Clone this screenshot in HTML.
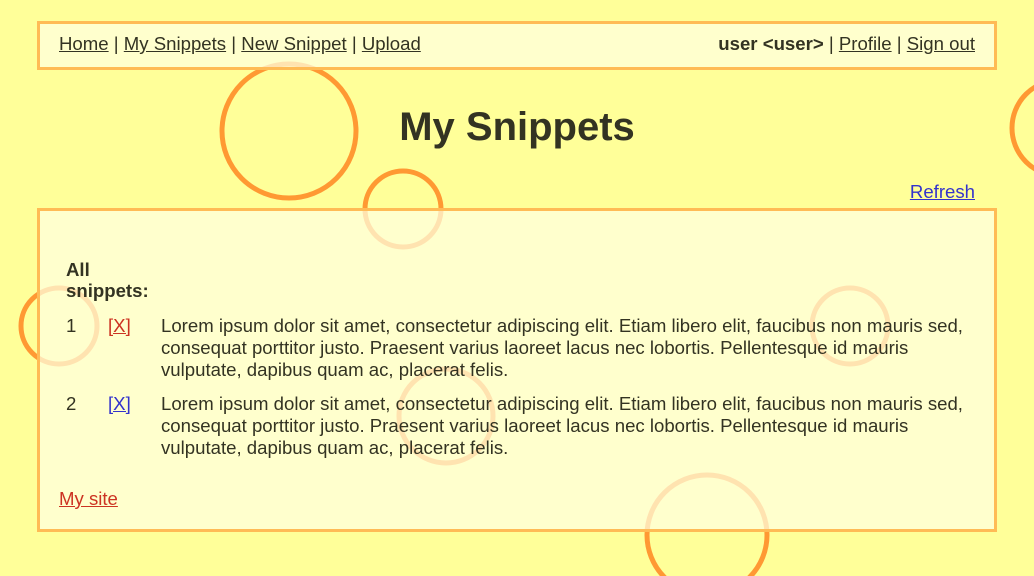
<!DOCTYPE html>
<html><head><meta charset="utf-8"><style>
html,body{margin:0;padding:0;}
body{width:1034px;height:576px;background:#ffff99;position:relative;overflow:hidden;font-family:"Liberation Sans",Arial,sans-serif;font-size:18.6px;color:#333322;}
svg{position:absolute;left:0;top:0;}
.box{position:absolute;left:37px;width:954px;border:3px solid #ffbb55;background:rgba(255,255,225,0.72);}
a{color:#333322;}
.t{position:absolute;white-space:nowrap;line-height:22px;}
</style></head><body>
<svg width="1034" height="576">
<g fill="none" stroke="#ff9933" stroke-width="5">
<circle cx="289" cy="131" r="67"/>
<circle cx="403" cy="209" r="38"/>
<circle cx="59" cy="326" r="38"/>
<circle cx="850" cy="326" r="38"/>
<circle cx="446" cy="416" r="47"/>
<circle cx="707" cy="535" r="60"/>
<circle cx="1060" cy="128" r="48"/>
</g>
</svg>
<div class="box" style="top:21px;height:43px;"></div>
<div class="t" style="left:59px;top:33px;"><a href="#">Home</a> | <a href="#">My Snippets</a> | <a href="#">New Snippet</a> | <a href="#">Upload</a></div>
<div class="t" style="right:59px;top:33px;"><b>user &lt;user&gt;</b> | <a href="#">Profile</a> | <a href="#">Sign out</a></div>
<div class="t" style="left:0;width:1034px;text-align:center;top:103px;font-size:40px;line-height:48px;font-weight:bold;">My Snippets</div>
<div class="t" style="right:59px;top:181px;"><a href="#" style="color:#3333cc">Refresh</a></div>
<div class="box" style="top:208px;height:318px;"></div>
<div class="t" style="left:66px;top:259px;font-weight:bold;line-height:21px;">All<br>snippets:</div>
<div class="t" style="left:66px;top:315px;">1</div>
<div class="t" style="left:108px;top:315px;"><a href="#" style="color:#cc3322">[X]</a></div>
<div class="t" style="left:161px;top:315px;">Lorem ipsum dolor sit amet, consectetur adipiscing elit. Etiam libero elit, faucibus non mauris sed,<br>consequat porttitor justo. Praesent varius laoreet lacus nec lobortis. Pellentesque id mauris<br>vulputate, dapibus quam ac, placerat felis.</div>
<div class="t" style="left:66px;top:393px;">2</div>
<div class="t" style="left:108px;top:393px;"><a href="#" style="color:#3333cc">[X]</a></div>
<div class="t" style="left:161px;top:393px;">Lorem ipsum dolor sit amet, consectetur adipiscing elit. Etiam libero elit, faucibus non mauris sed,<br>consequat porttitor justo. Praesent varius laoreet lacus nec lobortis. Pellentesque id mauris<br>vulputate, dapibus quam ac, placerat felis.</div>
<div class="t" style="left:59px;top:488px;"><a href="#" style="color:#cc3322">My site</a></div>
</body></html>
